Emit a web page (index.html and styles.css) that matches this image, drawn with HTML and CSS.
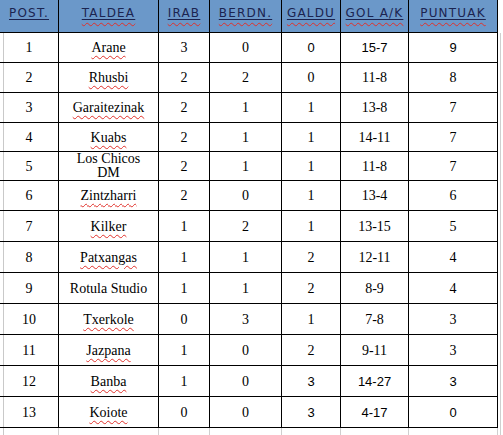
FILE: index.html
```html
<!DOCTYPE html>
<html lang="eu">
<head>
<meta charset="utf-8">
<title>Sailkapena</title>
<link rel="stylesheet" href="styles.css">
</head>
<body>
<div class="table">
  <div class="row head">
    <div class="cell"><span class="ul">POST.</span></div>
    <div class="cell"><span class="sp"><span class="ul">TALDEA</span></span></div>
    <div class="cell"><span class="sp"><span class="ul">IRAB</span></span></div>
    <div class="cell"><span class="sp"><span class="ul">BERDN.</span></span></div>
    <div class="cell"><span class="sp"><span class="ul">GALDU</span></span></div>
    <div class="cell"><span class="sp"><span class="ul">GOL A/K</span></span></div>
    <div class="cell"><span class="sp"><span class="ul">PUNTUAK</span></span></div>
    <div class="cell gap"></div>
  </div>

  <div class="row r30">
    <div class="cell first">1</div><div class="cell"><span class="sp">Arane</span></div><div class="cell">3</div><div class="cell">0</div><div class="cell sans">0</div><div class="cell sans">15-7</div><div class="cell sans">9</div><div class="cell gap"></div>
  </div>
  <div class="row r30">
    <div class="cell first">2</div><div class="cell"><span class="sp">Rhusbi</span></div><div class="cell">2</div><div class="cell">2</div><div class="cell">0</div><div class="cell">11-8</div><div class="cell">8</div><div class="cell gap"></div>
  </div>
  <div class="row r30">
    <div class="cell first">3</div><div class="cell"><span class="sp">Garaitezinak</span></div><div class="cell">2</div><div class="cell">1</div><div class="cell">1</div><div class="cell">13-8</div><div class="cell">7</div><div class="cell gap"></div>
  </div>
  <div class="row r29">
    <div class="cell first">4</div><div class="cell"><span class="sp">Kuabs</span></div><div class="cell">2</div><div class="cell">1</div><div class="cell">1</div><div class="cell">14-11</div><div class="cell">7</div><div class="cell gap"></div>
  </div>
  <div class="row r29">
    <div class="cell first">5</div><div class="cell two">Los Chicos<br>DM</div><div class="cell">2</div><div class="cell">1</div><div class="cell">1</div><div class="cell">11-8</div><div class="cell">7</div><div class="cell gap"></div>
  </div>
  <div class="row r30">
    <div class="cell first">6</div><div class="cell"><span class="sp">Zintzharri</span></div><div class="cell">2</div><div class="cell">0</div><div class="cell">1</div><div class="cell">13-4</div><div class="cell">6</div><div class="cell gap"></div>
  </div>
  <div class="row r31">
    <div class="cell first">7</div><div class="cell"><span class="sp">Kilker</span></div><div class="cell">1</div><div class="cell">2</div><div class="cell">1</div><div class="cell">13-15</div><div class="cell">5</div><div class="cell gap"></div>
  </div>
  <div class="row r31">
    <div class="cell first">8</div><div class="cell"><span class="sp">Patxangas</span></div><div class="cell">1</div><div class="cell">1</div><div class="cell">2</div><div class="cell">12-11</div><div class="cell">4</div><div class="cell gap"></div>
  </div>
  <div class="row r31">
    <div class="cell first">9</div><div class="cell">Rotula Studio</div><div class="cell">1</div><div class="cell">1</div><div class="cell">2</div><div class="cell">8-9</div><div class="cell">4</div><div class="cell gap"></div>
  </div>
  <div class="row r31">
    <div class="cell first">10</div><div class="cell"><span class="sp">Txerkole</span></div><div class="cell">0</div><div class="cell">3</div><div class="cell">1</div><div class="cell">7-8</div><div class="cell">3</div><div class="cell gap"></div>
  </div>
  <div class="row r31">
    <div class="cell first">11</div><div class="cell"><span class="sp">Jazpana</span></div><div class="cell">1</div><div class="cell">0</div><div class="cell">2</div><div class="cell">9-11</div><div class="cell">3</div><div class="cell gap"></div>
  </div>
  <div class="row r31">
    <div class="cell first">12</div><div class="cell"><span class="sp">Banba</span></div><div class="cell">1</div><div class="cell">0</div><div class="cell sans">3</div><div class="cell sans">14-27</div><div class="cell sans">3</div><div class="cell gap"></div>
  </div>
  <div class="row r31">
    <div class="cell first">13</div><div class="cell"><span class="sp">Koiote</span></div><div class="cell">0</div><div class="cell">0</div><div class="cell sans">3</div><div class="cell sans">4-17</div><div class="cell sans">0</div><div class="cell gap"></div>
  </div>

  <div class="row ghost">
    <div class="cell first"></div><div class="cell"></div><div class="cell"></div><div class="cell"></div><div class="cell"></div><div class="cell"></div><div class="cell"></div><div class="cell gap"></div>
  </div>
</div>
</body>
</html>
```

FILE: styles.css
```css
html, body {
  margin: 0;
  padding: 0;
  background: #ffffff;
}

body {
  font-family: "Liberation Serif", "Times New Roman", serif;
  font-size: 14px;
  color: #000;
  overflow: hidden;
}

.table {
  display: flex;
  flex-direction: column;
  width: 501px;
}

.row {
  display: grid;
  grid-template-columns: 59px 100px 51px 72px 59px 68px 89px 3px;
}

.r31 { height: 31px; }
.r30 { height: 30px; }
.r29 { height: 29px; }

.cell {
  box-sizing: border-box;
  border-right: 1px solid #000;
  border-bottom: 1px solid #000;
  display: flex;
  align-items: center;
  justify-content: center;
  text-align: center;
  line-height: 15px;
}

.cell.first {
  background: linear-gradient(to right, transparent 3px, #c9c9c9 3px, #c9c9c9 4px, transparent 4px);
}

.cell.gap {
  border-bottom: none;
  border-right: 1px solid #cfcfcf;
}

.cell.two {
  line-height: 14px;
}

.cell.sans {
  font-family: "Liberation Sans", Arial, sans-serif;
  font-size: 13px;
}

.head {
  height: 33px;
}

.head .cell {
  background: #6b98c9;
  align-items: flex-start;
  padding-top: 7px;
  font-family: "DejaVu Sans", sans-serif;
  font-size: 12px;
  letter-spacing: 1.2px;
  color: #1b2450;
  line-height: 13px;
}

.head .cell.gap {
  background: transparent;
  border-right: none;
}

.sp {
  text-decoration: underline wavy #e0302a;
  text-decoration-thickness: 1px;
  text-underline-offset: 3px;
}

.head .sp {
  text-underline-offset: 5px;
}

.ul {
  text-decoration: underline solid #1b2450;
  text-decoration-thickness: 1px;
  text-underline-offset: 2px;
}

.ghost {
  height: 20px;
}

.ghost .cell {
  border-bottom: none;
  border-right-color: #cfcfcf;
}
```
